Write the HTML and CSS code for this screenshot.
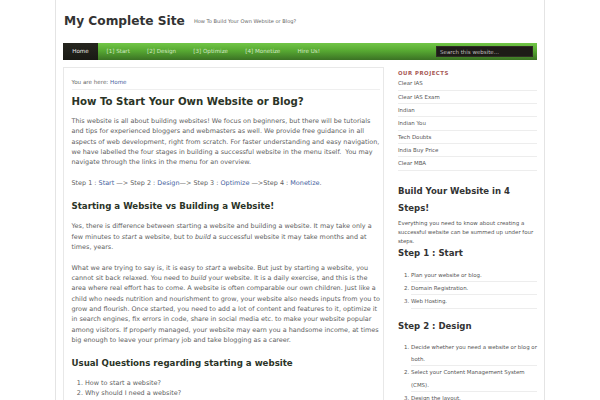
FILE: index.html
```html
<!DOCTYPE html>
<html lang="en">
<head>
<meta charset="utf-8">
<title>My Complete Site</title>
<link rel="stylesheet" href="styles.css">
</head>
<body>
<div class="wrap">
  <header class="header">
    <div class="site-title">My Complete Site</div>
    <div class="tagline">How To Build Your Own Website or Blog?</div>
  </header>
  <nav class="nav">
    <a class="nav-item active">Home</a>
    <a class="nav-item">[1] Start</a>
    <a class="nav-item">[2] Design</a>
    <a class="nav-item">[3] Optimize</a>
    <a class="nav-item">[4] Monetize</a>
    <a class="nav-item">Hire Us!</a>
    <div class="search">Search this website...</div>
  </nav>
  <div class="columns">
    <main class="main">
      <div class="crumb">You are here: <a class="link">Home</a></div>
      <h1 class="title">How To Start Your Own Website or Blog?</h1>
      <p class="para">This website is all about building websites! We focus on beginners, but there will be tutorials and tips for experienced bloggers and webmasters as well. We provide free guidance in all aspects of web development, right from scratch. For faster understanding and easy navigation, we have labelled the four stages in building a successful website in the menu itself.&nbsp; You may navigate through the links in the menu for an overview.</p>
      <p class="para">Step 1 : <a class="link">Start</a> —&gt; Step 2 : <a class="link">Design</a>—&gt; Step 3 : <a class="link">Optimize</a> —&gt;Step 4 : <a class="link">Monetize</a>.</p>
      <h2 class="subtitle">Starting a Website vs Building a Website!</h2>
      <p class="para">Yes, there is difference between starting a website and building a website. It may take only a few minutes to <em>start</em> a website, but to <em>build</em> a successful website it may take months and at times, years.</p>
      <p class="para">What we are trying to say is, it is easy to <em>start</em> a website. But just by starting a website, you cannot sit back relaxed. You need to <em>build</em> your website. It is a daily exercise, and this is the area where real effort has to come. A website is often comparable our own children. Just like a child who needs nutrition and nourishment to grow, your website also needs inputs from you to grow and flourish. Once started, you need to add a lot of content and features to it, optimize it in search engines, fix errors in code, share in social media etc. to make your website popular among visitors. If properly managed, your website may earn you a handsome income, at times big enough to leave your primary job and take blogging as a career.</p>
      <h2 class="subtitle">Usual Questions regarding starting a website</h2>
      <ol class="qlist">
        <li>How to start a website?</li>
        <li>Why should I need a website?</li>
        <li>What is the difference between a website and a blog?</li>
        <li>How much does it cost to build a website?</li>
      </ol>
    </main>
    <aside class="sidebar">
      <div class="widget-title">Our Projects</div>
      <ul class="plist">
        <li>Clear IAS</li>
        <li>Clear IAS Exam</li>
        <li>Indian</li>
        <li>Indian You</li>
        <li>Tech Doubts</li>
        <li>India Buy Price</li>
        <li>Clear MBA</li>
      </ul>
      <h3 class="side-head first">Build Your Website in 4 Steps!</h3>
      <p class="side-text">Everything you need to know about creating a successful website can be summed up under four steps.</p>
      <h3 class="side-head tight">Step 1 : Start</h3>
      <ol class="slist">
        <li>Plan your website or blog.</li>
        <li>Domain Registration.</li>
        <li>Web Hosting.</li>
      </ol>
      <h3 class="side-head">Step 2 : Design</h3>
      <ol class="slist">
        <li>Decide whether you need a website or blog or both.</li>
        <li>Select your Content Management System (CMS).</li>
        <li>Design the layout.</li>
      </ol>
    </aside>
  </div>
</div>
</body>
</html>
```
FILE: styles.css
```css
html, body {
  margin: 0;
  padding: 0;
  background: #ffffff;
}
body {
  font-family: "DejaVu Sans", Verdana, sans-serif;
  color: #5f5f5f;
  overflow: hidden;
}
.wrap {
  width: 474px;
  margin: 0 auto;
  padding: 0 7px;
  border-left: 1px solid #e4e4e4;
  border-right: 1px solid #e4e4e4;
  min-height: 400px;
}
.header {
  height: 42.5px;
  display: flex;
  align-items: center;
  padding-left: 1px;
}
.site-title {
  font-size: 12.2px;
  font-weight: bold;
  color: #333333;
  line-height: 14px;
  margin-top: -1px;
}
.tagline {
  font-size: 5.1px;
  color: #666666;
  margin-left: 9px;
}
.nav {
  height: 17.5px;
  display: flex;
  align-items: stretch;
  background: linear-gradient(#72c647 0%, #57a932 45%, #3b7224 100%);
  font-size: 5.6px;
}
.nav-item {
  display: flex;
  align-items: center;
  padding: 0 8.6px;
  color: #d3e6c4;
}
.nav-item.active {
  background: linear-gradient(#26261f, #191914);
  color: #e8e8e8;
  padding: 0 9.2px;
}
.search {
  margin: 3.5px 4px 3px auto;
  width: 92px;
  background: #1d1b17;
  border: 1px solid #2e2c24;
  color: #bdbdbd;
  font-size: 5.5px;
  display: flex;
  align-items: center;
  padding-left: 3px;
}
.columns {
  display: flex;
  gap: 14px;
  margin-top: 7px;
}
.main {
  width: 311px;
  flex: none;
  border: 1px solid #e8e8e8;
  border-bottom: none;
  padding: 0 0.5px 0 7.5px;
  font-size: 6.45px;
}
.crumb {
  font-size: 5.6px;
  line-height: 10px;
  padding: 9px 0 2px;
  border-bottom: 1px solid #efefef;
  margin-right: 3px;
  color: #666666;
}
.link {
  color: #4663a0;
}
.title {
  font-size: 10.2px;
  line-height: 16px;
  margin: 4px 0 6px;
  color: #2b3427;
}
.para {
  line-height: 10.3px;
  margin: 0 0 10.5px;
}
.subtitle {
  font-size: 8.65px;
  line-height: 14px;
  margin: 10.5px 0 8.6px;
  color: #2b3427;
}
.qlist {
  margin: 0;
  padding-left: 13.5px;
  line-height: 10px;
}
.sidebar {
  flex: 1;
  padding-top: 2.3px;
  font-size: 5.45px;
  color: #555555;
}
.widget-title {
  font-size: 5.4px;
  font-weight: bold;
  letter-spacing: 0.5px;
  text-transform: uppercase;
  color: #a85a55;
  line-height: 8px;
}
.plist {
  list-style: none;
  margin: 0;
  padding: 0;
}
.plist li,
.slist li {
  line-height: 12.33px;
  border-bottom: 1px solid #ededed;
}
.side-head {
  font-size: 8.55px;
  line-height: 16.6px;
  color: #333333;
  margin: 9px 0 0;
}
.side-head.first {
  margin-top: 12.7px;
}
.side-head.tight {
  margin-top: 0;
}
.side-text {
  line-height: 8.6px;
  margin: 3px 0 0;
}
.slist {
  margin: 6.7px 0 0;
  padding-left: 13px;
}
```
